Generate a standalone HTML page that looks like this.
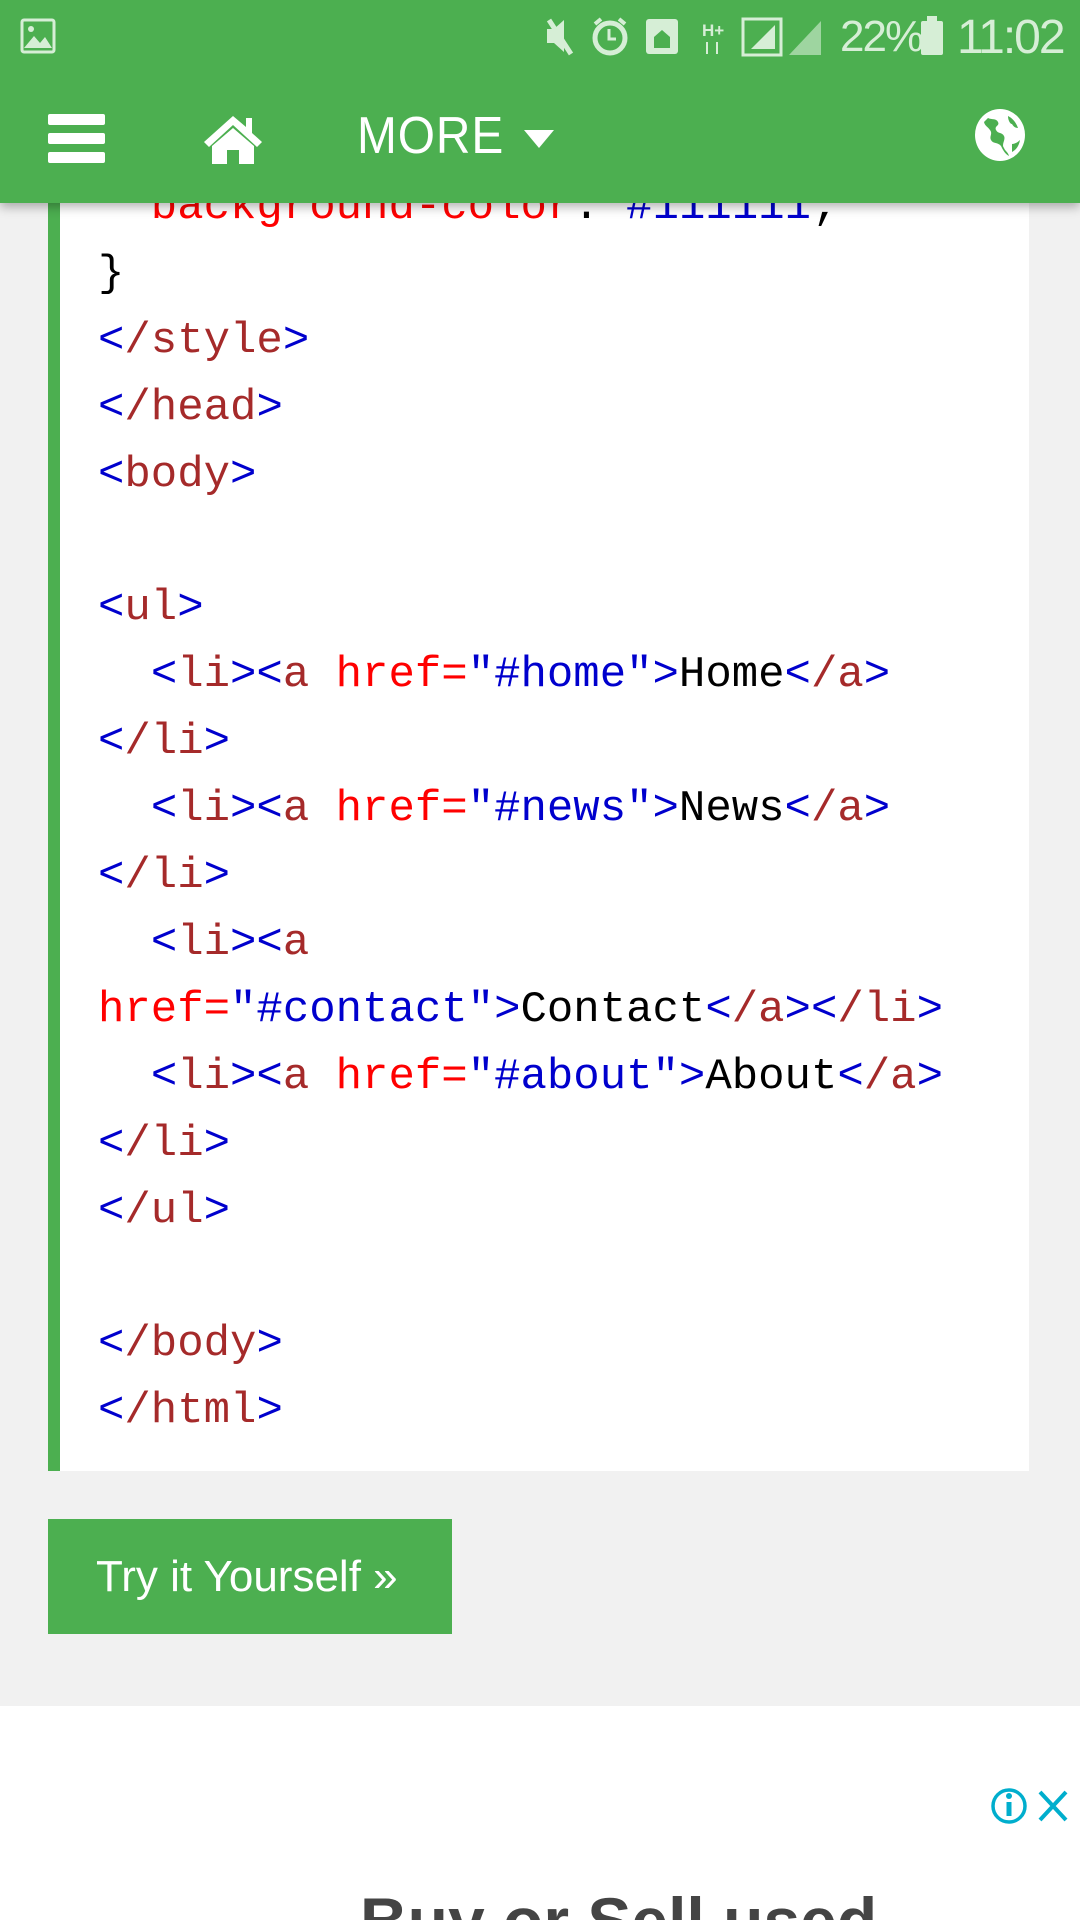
<!DOCTYPE html>
<html><head><meta charset="utf-8"><style>
*{margin:0;padding:0;box-sizing:border-box}
html,body{width:1080px;height:1920px;overflow:hidden;background:#f1f1f1;font-family:"Liberation Sans",sans-serif;position:relative}
.box{position:absolute;left:48px;top:0;width:981px;height:1471px;background:#fff;border-left:12px solid #4caf50}
pre{position:absolute;left:98px;top:174px;font-family:"Liberation Mono",monospace;font-size:44px;line-height:66.9px;color:#000}
.t{color:#a52a2a}.b{color:#0000cd}.r{color:#ff0000}
.hdr{position:absolute;left:0;top:0;width:1080px;height:203px;background:#4caf50;box-shadow:0 4px 10px rgba(0,0,0,.3)}
.btn{position:absolute;left:48px;top:1519px;width:404px;height:115px;background:#4caf50;color:#fff;font-size:44px;line-height:115px;padding-left:48px}
.ad{position:absolute;left:0;top:1706px;width:1080px;height:214px;background:#fff;overflow:hidden}
</style></head><body>
<div class="box"></div>
<pre><span class="r">  background-color</span>: <span class="b">#111111</span>;
}
<span class="b">&lt;</span><span class="t">/style</span><span class="b">&gt;</span>
<span class="b">&lt;</span><span class="t">/head</span><span class="b">&gt;</span>
<span class="b">&lt;</span><span class="t">body</span><span class="b">&gt;</span>

<span class="b">&lt;</span><span class="t">ul</span><span class="b">&gt;</span>
  <span class="b">&lt;</span><span class="t">li</span><span class="b">&gt;&lt;</span><span class="t">a</span> <span class="r">href=</span><span class="b">"#home"&gt;</span>Home<span class="b">&lt;</span><span class="t">/a</span><span class="b">&gt;</span>
<span class="b">&lt;</span><span class="t">/li</span><span class="b">&gt;</span>
  <span class="b">&lt;</span><span class="t">li</span><span class="b">&gt;&lt;</span><span class="t">a</span> <span class="r">href=</span><span class="b">"#news"&gt;</span>News<span class="b">&lt;</span><span class="t">/a</span><span class="b">&gt;</span>
<span class="b">&lt;</span><span class="t">/li</span><span class="b">&gt;</span>
  <span class="b">&lt;</span><span class="t">li</span><span class="b">&gt;&lt;</span><span class="t">a</span>
<span class="r">href=</span><span class="b">"#contact"&gt;</span>Contact<span class="b">&lt;</span><span class="t">/a</span><span class="b">&gt;&lt;</span><span class="t">/li</span><span class="b">&gt;</span>
  <span class="b">&lt;</span><span class="t">li</span><span class="b">&gt;&lt;</span><span class="t">a</span> <span class="r">href=</span><span class="b">"#about"&gt;</span>About<span class="b">&lt;</span><span class="t">/a</span><span class="b">&gt;</span>
<span class="b">&lt;</span><span class="t">/li</span><span class="b">&gt;</span>
<span class="b">&lt;</span><span class="t">/ul</span><span class="b">&gt;</span>

<span class="b">&lt;</span><span class="t">/body</span><span class="b">&gt;</span>
<span class="b">&lt;</span><span class="t">/html</span><span class="b">&gt;</span></pre>

<div class="hdr">
  <svg style="position:absolute;left:20px;top:18px" width="36" height="36" viewBox="0 0 36 36"><rect x="2" y="2" width="32" height="32" rx="2" fill="none" stroke="#d6eed6" stroke-width="3"/><circle cx="11" cy="11" r="3" fill="#d6eed6"/><path d="M4 30 L14 18 L20 25 L25 19 L32 30Z" fill="#d6eed6"/></svg>
  <svg style="position:absolute;left:545px;top:16px" width="300" height="42" viewBox="0 0 300 42">
    <g fill="#d6eed6">
      <path d="M2 13h7l10-9v32l-10-9H2z"/><path d="M4 4l22 34" stroke="#d6eed6" stroke-width="5"/>
      <circle cx="65" cy="22" r="15" fill="none" stroke="#d6eed6" stroke-width="5"/><path d="M64 13v10h7" fill="none" stroke="#d6eed6" stroke-width="3"/><path d="M50 8l6-5M80 8l-6-5" stroke="#d6eed6" stroke-width="4"/>
      <rect x="101" y="3" width="32" height="35" rx="3"/><path d="M109 32v-11l8-7 8 7v11z" fill="#4caf50"/>
      <text x="157" y="20" font-size="17" font-family="Liberation Sans" font-weight="bold">H+</text>
      <path d="M162 38v-12M172 26v12" stroke="#d6eed6" stroke-width="2"/>
      <rect x="198" y="3" width="38" height="36" fill="none" stroke="#d6eed6" stroke-width="3"/><path d="M206 33l24-24v24z"/>
      <path d="M244 39l32-34v34z" opacity=".6"/>
    </g>
  </svg>
  <div style="position:absolute;left:840px;top:12px;color:#d6eed6;font-size:44px;letter-spacing:-2px">22%</div>
  <svg style="position:absolute;left:920px;top:16px" width="24" height="40"><rect x="1" y="5" width="22" height="34" rx="2" fill="#d6eed6"/><rect x="7" y="0" width="10" height="6" fill="#d6eed6"/></svg>
  <div style="position:absolute;left:957px;top:10px;color:#d6eed6;font-size:48px;letter-spacing:-2px">11:02</div>
  <div style="position:absolute;left:48px;top:114px;width:57px;height:11px;background:#fff;border-radius:2px"></div>
  <div style="position:absolute;left:48px;top:133px;width:57px;height:11px;background:#fff;border-radius:2px"></div>
  <div style="position:absolute;left:48px;top:152px;width:57px;height:11px;background:#fff;border-radius:2px"></div>
  <svg style="position:absolute;left:202px;top:112px" width="62" height="52" viewBox="0 0 62 52"><path d="M31 4 L2 30 L7 35 L31 13 L55 35 L60 30 L50 21 V6 H44 V15Z" fill="#fff"/><path d="M10 34 L31 16 L52 34 V52 H37 V38 H25 V52 H10Z" fill="#fff"/></svg>
  <div style="position:absolute;left:357px;top:106px;color:#fff;font-size:52px;letter-spacing:1px;transform:scaleX(.92);transform-origin:left">MORE</div>
  <svg style="position:absolute;left:524px;top:130px" width="30" height="20"><path d="M0 0h30L15 18z" fill="#fff"/></svg>
  <svg style="position:absolute;left:974px;top:108px" width="52" height="54" viewBox="0 0 52 54"><ellipse cx="26" cy="27" rx="25" ry="26" fill="#fff"/><path d="M14 10c4 2 8 0 10 4s-4 4-2 8 6 2 8 6-3 8 0 12c1 3 4 4 5 8-4-2-6-6-8-10-3-4-8-2-10-6s2-6-1-10-5-4-6-8z M34 8c4 2 8 6 10 12-3 0-5-2-6-4-2 0-4-4-4-8z M38 36c3 0 6-2 8-4-1 6-4 10-8 12z" fill="#4caf50"/></svg>
</div>

<div class="btn">Try it Yourself »</div>
<div class="ad">
  <svg style="position:absolute;left:990px;top:80px" width="90" height="40" viewBox="0 0 90 40"><circle cx="19" cy="20" r="16" fill="none" stroke="#00aecd" stroke-width="3.5"/><rect x="16.5" y="16" width="5" height="14" fill="#00aecd"/><circle cx="19" cy="10" r="3" fill="#00aecd"/><path d="M50 6 L76 34 M76 6 L50 34" stroke="#00aecd" stroke-width="4"/></svg>
  <div style="position:absolute;left:360px;top:182px;font-size:66px;line-height:66px;font-weight:bold;color:#444">Buy or Sell used</div>
</div>
</body></html>
